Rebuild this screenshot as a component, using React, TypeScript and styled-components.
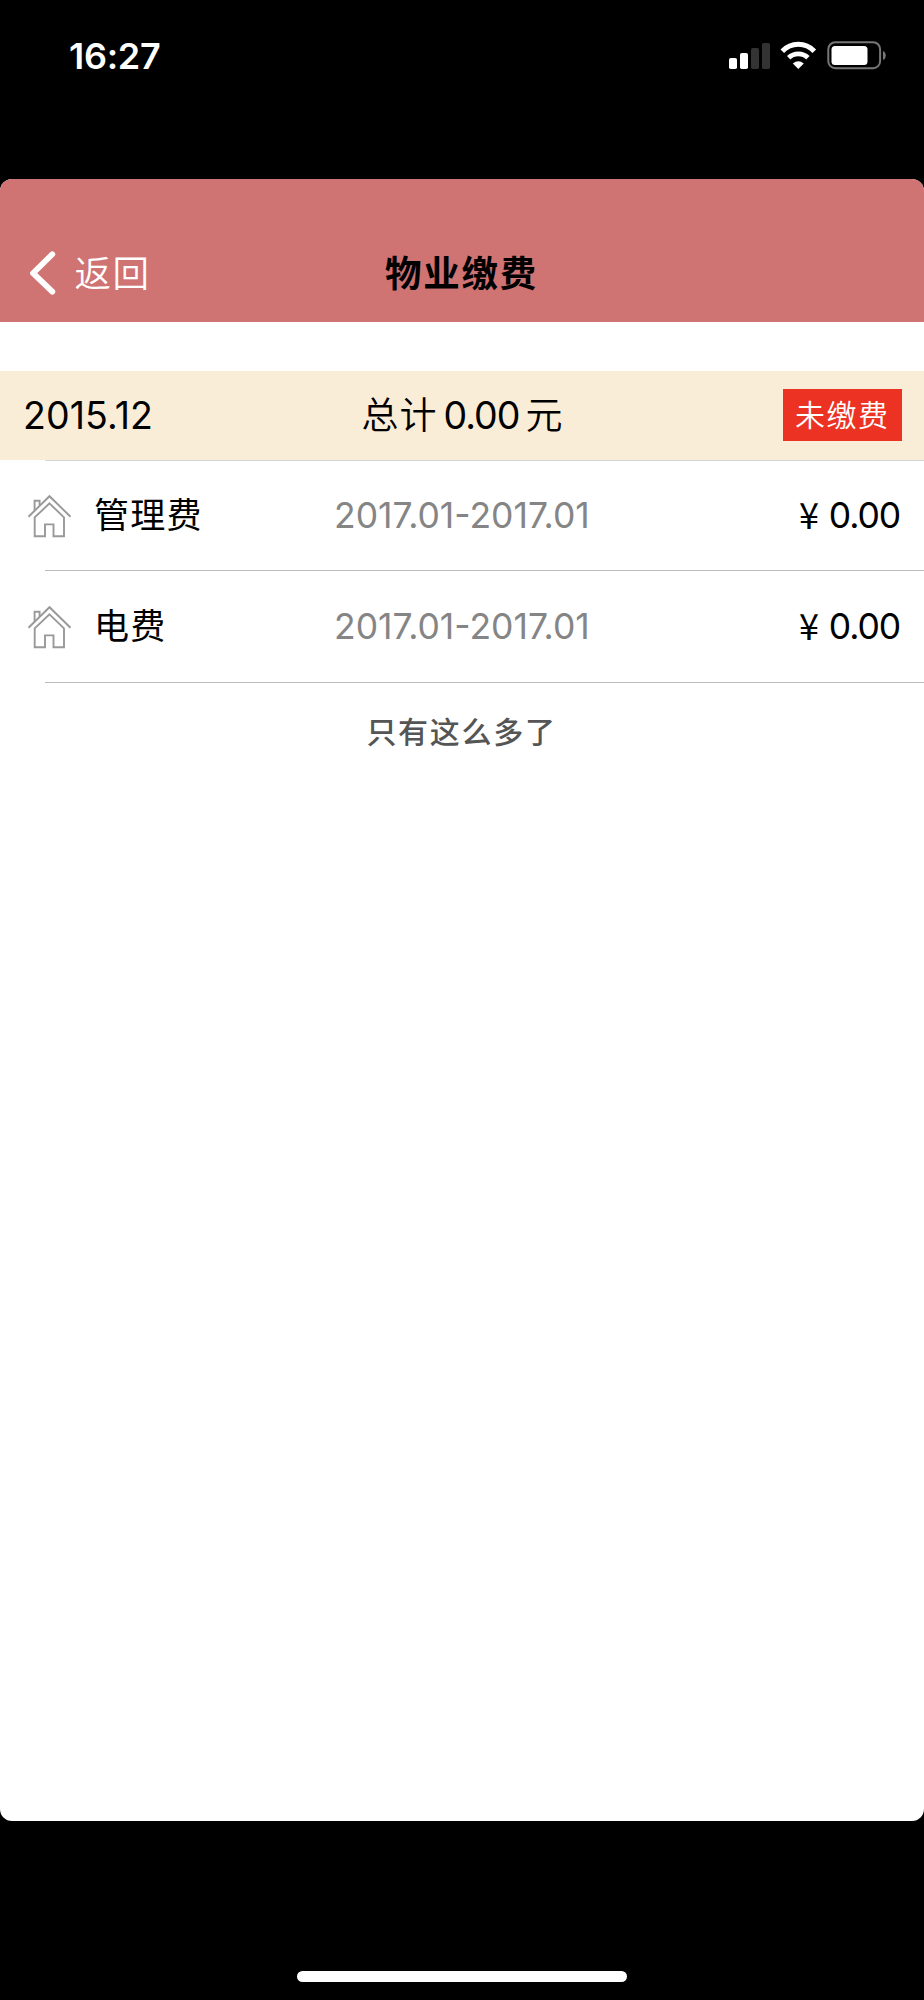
import React from "react";
import styled, { createGlobalStyle } from "styled-components";

const GlobalStyle = createGlobalStyle`
  * { box-sizing: border-box; }
  body { margin: 0; background: #000; }
`;

const Screen = styled.div`
  width: 924px;
  height: 2000px;
  display: flex;
  flex-direction: column;
  background: #000;
  color: #000;
  overflow: hidden;
  white-space: nowrap;
  font-family: Inter, "Noto Sans CJK SC", sans-serif;
`;

const StatusBar = styled.header`
  height: 179px;
  padding: 32px 38px 0 69px;
  display: flex;
  justify-content: space-between;
  align-items: flex-start;
  color: #fff;
`;

const Clock = styled.time`
  font-size: 36px;
  line-height: 48px;
  font-weight: 600;
  letter-spacing: -0.3px;
`;

const StatusIcons = styled.svg`
  display: block;
  width: 159px;
  height: 48px;
`;

const Sheet = styled.main`
  height: 1642px;
  border-radius: 12px;
  background: #fff;
  overflow: hidden;
`;

const NavBar = styled.nav`
  height: 143px;
  padding: 46px 30px 0 29px;
  display: grid;
  grid-template-columns: 1fr auto 1fr;
  align-items: start;
  background: #cf7373;
`;

const BackButton = styled.a`
  height: 96px;
  display: flex;
  align-items: center;
  gap: 17.5px;
  color: #fff;
`;

const BackLabel = styled.span`
  padding-bottom: 3px;
  font-size: 36.5px;
  font-weight: 350;
  letter-spacing: 1.5px;
`;

const Title = styled.h1`
  margin: 0;
  padding-top: 1px;
  line-height: 96px;
  font-size: 36.5px;
  font-weight: 700;
  letter-spacing: 1.7px;
`;

const Summary = styled.section`
  height: 89px;
  margin-top: 49px;
  padding: 0 22px 0 23px;
  display: grid;
  grid-template-columns: 1fr auto 1fr;
  align-items: center;
  background: #faedd8;
  font-size: 37.5px;
`;

const Month = styled.span`
  letter-spacing: 0.1px;
`;

const Total = styled.span`
  display: flex;
  align-items: center;
  gap: 6px;
`;

const TotalLabel = styled.span`
  padding-bottom: 5px;
  font-size: 37px;
  font-weight: 350;
  letter-spacing: 1px;
`;

const TotalValue = styled.span`
  letter-spacing: -1px;
`;

const Badge = styled.span`
  justify-self: end;
  align-self: start;
  width: 119px;
  height: 52px;
  margin-top: 18px;
  padding-left: 12px;
  line-height: 52px;
  background: #ec3323;
  color: #fff;
  font-size: 30px;
  font-weight: 350;
  letter-spacing: 1.5px;
`;

const List = styled.ul`
  margin: 0;
  padding: 0;
  list-style: none;
`;

const Separator = styled.div<{ $light?: boolean }>`
  height: 1px;
  margin-left: 45px;
  background: ${(p) => (p.$light ? "#d6d6da" : "#bcbcbe")};
`;

const Row = styled.li<{ $height: number }>`
  height: ${(p) => p.$height}px;
  padding: 0 24px 1px 27px;
  display: grid;
  grid-template-columns: 67px 240px 1fr auto;
  align-items: center;
  font-size: 35.5px;
`;

const Name = styled.span`
  padding-bottom: 6px;
  font-size: 35px;
  letter-spacing: 1.3px;
`;

const Period = styled.span`
  color: #858585;
`;

const Amount = styled.span`
  display: flex;
  align-items: center;
  letter-spacing: -1.1px;
`;

const Currency = styled.span`
  padding-bottom: 5px;
  margin-right: 11px;
  font-family: "Noto Sans CJK SC", sans-serif;
  font-size: 36px;
`;

const EndNote = styled.p`
  margin: 0;
  padding-right: 1px;
  line-height: 98px;
  text-align: center;
  color: #555;
  font-size: 30px;
  font-weight: 500;
  letter-spacing: 1.7px;
`;

const HomeArea = styled.footer`
  flex: 1;
  display: flex;
  justify-content: center;
  align-items: flex-end;
  padding-bottom: 18px;
`;

const HomeIndicator = styled.div`
  width: 330px;
  height: 11px;
  border-radius: 6px;
  background: #fff;
`;

const HouseIcon = () => (
  <svg width="45" height="45" viewBox="0 0 45 45" fill="none" stroke="#999" strokeWidth="1.9">
    <path d="M1.5 23.7 22.5 3.2 43.5 23.7" />
    <path d="M7.6 17.6V7.8H12.6V12.6" />
    <path d="M22.5 10.4 37 24.4V43.2H26.5V31.4H18V43.2H7.7V24.4Z" />
  </svg>
);

const fees = [
  { name: "管理费", period: "2017.01-2017.01", amount: "0.00", height: 109 },
  { name: "电费", period: "2017.01-2017.01", amount: "0.00", height: 111 },
];

export default function App() {
  return (
    <>
      <GlobalStyle />
      <Screen>
        <StatusBar>
          <Clock>16:27</Clock>
          <StatusIcons viewBox="727 32 159 48">
            <g fill="#fff">
              <rect x="729" y="58" width="8" height="11" rx="1.8" />
              <rect x="740" y="53" width="8" height="16" rx="1.8" />
              <rect x="751" y="48" width="8" height="21" rx="1.8" fill="#333" />
              <rect x="762" y="43" width="8" height="26" rx="1.8" fill="#333" />
              <path d="M798.3 69 792.8 63.5Q798.3 58.8 803.8 63.5Z" />
            </g>
            <g fill="none" stroke="#fff">
              <path d="M782.3 51.2Q789 44.3 798.3 44.3T814.3 51.2" strokeWidth="5" />
              <path d="M788.7 57.8Q792.6 53.9 798.3 53.9T807.9 57.8" strokeWidth="4.8" />
            </g>
            <rect x="828.3" y="42.2" width="51.8" height="26" rx="7" fill="none" stroke="#777" strokeWidth="2" />
            <rect x="831.5" y="46" width="36" height="19" rx="3.5" fill="#fff" />
            <path d="M883 51Q885.7 52 885.7 55.5T883 60Z" fill="#777" />
          </StatusIcons>
        </StatusBar>
        <Sheet>
          <NavBar>
            <BackButton>
              <svg width="28" height="44" viewBox="0 0 28 44" fill="none" stroke="#fff" strokeWidth="5.8" strokeLinecap="round" strokeLinejoin="round">
                <path d="M23.3 3.3 4 22.2 23.3 40.7" />
              </svg>
              <BackLabel>返回</BackLabel>
            </BackButton>
            <Title>物业缴费</Title>
          </NavBar>
          <Summary>
            <Month>2015.12</Month>
            <Total>
              <TotalLabel>总计</TotalLabel>
              <TotalValue>0.00</TotalValue>
              <TotalLabel>元</TotalLabel>
            </Total>
            <Badge>未缴费</Badge>
          </Summary>
          <Separator $light />
          <List>
            {fees.map((fee) => (
              <React.Fragment key={fee.name}>
                <Row $height={fee.height}>
                  <HouseIcon />
                  <Name>{fee.name}</Name>
                  <Period>{fee.period}</Period>
                  <Amount><Currency>¥</Currency>{fee.amount}</Amount>
                </Row>
                <Separator />
              </React.Fragment>
            ))}
          </List>
          <EndNote>只有这么多了</EndNote>
        </Sheet>
        <HomeArea><HomeIndicator /></HomeArea>
      </Screen>
    </>
  );
}
